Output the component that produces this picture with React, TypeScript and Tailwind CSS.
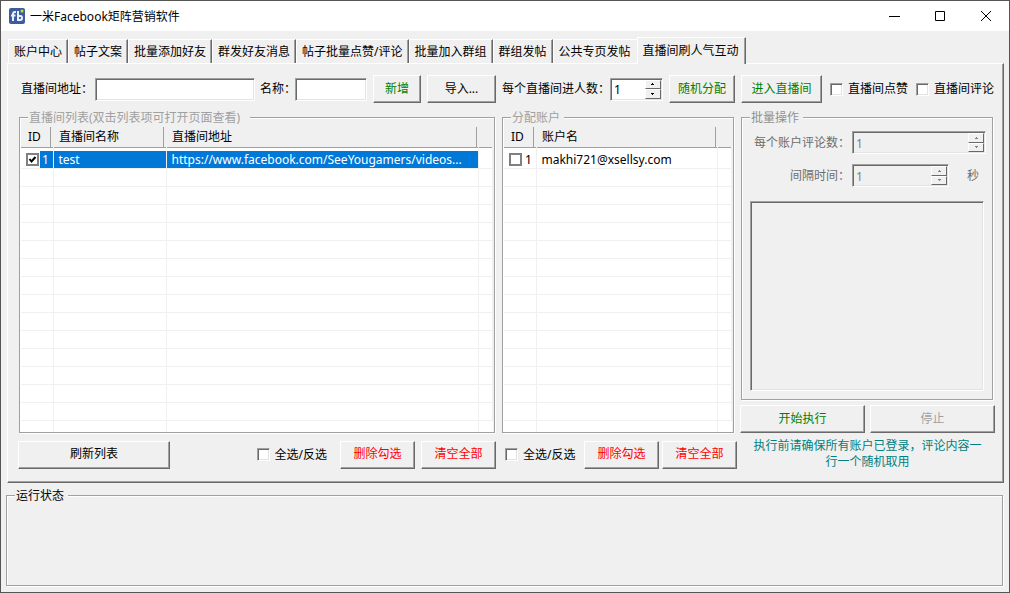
import React, { useState } from "react";

const tabs = [
  "账户中心",
  "帖子文案",
  "批量添加好友",
  "群发好友消息",
  "帖子批量点赞/评论",
  "批量加入群组",
  "群组发帖",
  "公共专页发帖",
  "直播间刷人气互动",
];

const blankRows = Array.from({ length: 14 }, (_, i) => i);

const sunken =
  "border border-t-[#a0a0a0] border-l-[#a0a0a0] border-r-white border-b-white shadow-[inset_1px_1px_0_#696969,inset_-1px_-1px_0_#e3e3e3]";
const cell = "h-[18px] border-r border-b border-[#f0f0f0] p-0";
const lastCell = "border-r border-[#f0f0f0] p-0";

type ButtonProps = {
  children: React.ReactNode;
  className?: string;
  disabled?: boolean;
};

const PushButton = ({ children, className = "", disabled }: ButtonProps) => (
  <button
    type="button"
    disabled={disabled}
    className={`h-7 shrink-0 border border-t-white border-l-white border-r-[#696969] border-b-[#696969] bg-[#f0f0f0] pb-px shadow-[inset_-1px_-1px_0_#a0a0a0] ${className}`}
  >
    {children}
  </button>
);

type SpinnerProps = { id: string; className: string; disabled?: boolean };

const Spinner = ({ id, className, disabled = false }: SpinnerProps) => {
  const [value, setValue] = useState("1");
  const step = (n: number) => setValue(String(Number(value) + n));
  const arrow =
    "flex flex-1 items-center justify-center border border-t-white border-l-white border-r-[#696969] border-b-[#696969] bg-[#f0f0f0]";

  return (
    <div
      className={`flex h-[23px] p-px ${sunken} ${disabled ? "bg-[#f0f0f0] text-[#808080]" : "bg-white"} ${className}`}
    >
      <input
        id={id}
        value={value}
        disabled={disabled}
        onChange={(e) => setValue(e.target.value)}
        className="min-w-0 flex-1 bg-transparent pt-0.5 pl-0.5 outline-none"
      />
      <div className="flex w-4 flex-col">
        <button type="button" aria-label="+" disabled={disabled} onClick={() => step(1)} className={arrow}>
          <svg width="3" height="2" viewBox="0 0 3 2" shapeRendering="crispEdges" fill="currentColor">
            <path d="M1 0h1v1h1v1H0V1h1z" />
          </svg>
        </button>
        <button type="button" aria-label="-" disabled={disabled} onClick={() => step(-1)} className={arrow}>
          <svg width="3" height="2" viewBox="0 0 3 2" shapeRendering="crispEdges" fill="currentColor">
            <path d="M0 0h3v1H2v1H1V1H0z" />
          </svg>
        </button>
      </div>
    </div>
  );
};

const CheckOption = ({ label }: { label: string }) => (
  <label className="flex shrink-0 items-center gap-[5px]">
    <input type="checkbox" className={`size-[13px] appearance-none bg-white checked:bg-[#0078d7] ${sunken}`} />
    {label}
  </label>
);

const RowCheck = ({ label, checked = false }: { label: string; checked?: boolean }) => {
  const [on, setOn] = useState(checked);
  return (
    <span className="relative mr-px ml-[5px] block size-[13px] text-black">
      <input
        type="checkbox"
        aria-label={label}
        checked={on}
        onChange={() => setOn(!on)}
        className="block size-[13px] appearance-none border-2 border-[#808080] bg-white"
      />
      {on && (
        <svg className="pointer-events-none absolute inset-0" width="13" height="13" viewBox="0 0 13 13" fill="none">
          <path d="M3.5 6l2 2.5L9.5 4" stroke="#000" strokeWidth="2" />
        </svg>
      )}
    </span>
  );
};

const HeadCell = ({ children, className = "pl-1.5" }: { children: React.ReactNode; className?: string }) => (
  <th className="p-0 pt-0.5 text-left font-normal">
    <div className={`mr-0.5 h-5 border-r border-[#a0a0a0] leading-5 ${className}`}>{children}</div>
  </th>
);

type GroupProps = {
  title: string;
  className?: string;
  legendClass?: string;
  children?: React.ReactNode;
};

const Group = ({ title, className = "", legendClass = "ml-2 pr-1", children }: GroupProps) => (
  <fieldset
    className={`min-w-0 border border-[#a0a0a0] shadow-[1px_1px_0_#fff,inset_1px_1px_0_#fff] ${className}`}
  >
    <legend className={`h-4 bg-[#f0f0f0] pl-px leading-[17px] ${legendClass}`}>{title}</legend>
    {children}
  </fieldset>
);

const RoomTable = () => (
  <table className="ml-px w-[calc(100%-2px)] table-fixed border-collapse bg-white">
    <colgroup>
      <col className="w-8" />
      <col className="w-[113px]" />
      <col />
      <col className="w-3.5" />
    </colgroup>
    <thead>
      <tr className="h-[22px] border-b border-[#a0a0a0] bg-[#f0f0f0]">
        <HeadCell className="pl-[7px]">ID</HeadCell>
        <HeadCell>直播间名称</HeadCell>
        <HeadCell>直播间地址</HeadCell>
        <th className="p-0" />
      </tr>
    </thead>
    <tbody>
      <tr className="h-[21px] text-white">
        <td className={cell}>
          <div className="mt-[3px] flex h-[17px] items-center">
            <RowCheck label="test" checked />
            <span className="h-[17px] flex-1 bg-[#0078d7] pl-0.5 leading-[17px]">1</span>
          </div>
        </td>
        <td className={cell}>
          <div className="mt-[3px] h-[17px] bg-[#0078d7] pl-[5px] leading-[17px]">test</div>
        </td>
        <td className={cell}>
          <div className="mt-[3px] h-[17px] truncate bg-[#0078d7] pl-[5px] leading-[17px]">
            https://www.facebook.com/SeeYougamers/videos...
          </div>
        </td>
        <td className={cell} />
      </tr>
      {blankRows.map((i) => (
        <tr key={i}>
          <td className={cell} />
          <td className={cell} />
          <td className={cell} />
          <td className={cell} />
        </tr>
      ))}
      <tr className="h-[11px]">
        <td className={lastCell} />
        <td className={lastCell} />
        <td className={lastCell} />
        <td />
      </tr>
    </tbody>
  </table>
);

const AccountTable = () => (
  <table className="ml-px w-[calc(100%-2px)] table-fixed border-collapse bg-white">
    <colgroup>
      <col className="w-8" />
      <col />
      <col className="w-3.5" />
    </colgroup>
    <thead>
      <tr className="h-[22px] border-b border-[#a0a0a0] bg-[#f0f0f0]">
        <HeadCell className="pl-[7px]">ID</HeadCell>
        <HeadCell>账户名</HeadCell>
        <th className="p-0" />
      </tr>
    </thead>
    <tbody>
      <tr className="h-[21px]">
        <td className={cell}>
          <div className="mt-[3px] flex h-[17px] items-center">
            <RowCheck label="makhi721@xsellsy.com" />
            <span className="flex-1 pl-0.5 leading-[17px]">1</span>
          </div>
        </td>
        <td className={cell}>
          <div className="mt-[3px] h-[17px] truncate pl-[5px] leading-[17px]">makhi721@xsellsy.com</div>
        </td>
        <td className={cell} />
      </tr>
      {blankRows.map((i) => (
        <tr key={i}>
          <td className={cell} />
          <td className={cell} />
          <td className={cell} />
        </tr>
      ))}
      <tr className="h-[11px]">
        <td className={lastCell} />
        <td className={lastCell} />
        <td />
      </tr>
    </tbody>
  </table>
);

const TitleBar = () => (
  <header className="flex h-[30px] items-center bg-white pl-2">
    <svg width="16" height="16" viewBox="0 0 16 16">
      <rect width="16" height="16" rx="2" fill="#3f5c9a" />
      <path d="M7 4H6Q4 4 4 6V13M2 7.500H6.500" fill="none" stroke="#e8eefb" strokeWidth="2" />
      <path d="M9 3v10M9 8h2.500Q13 8 13 10t-1.500 2H9" fill="none" stroke="#e8eefb" strokeWidth="2" />
      <circle cx="13" cy="3" r="1.500" fill="#c6d93a" />
    </svg>
    <h1 className="ml-[5px] flex-1 pt-px text-xs">一米Facebook矩阵营销软件</h1>
    <button type="button" aria-label="最小化" className="flex h-full w-[46px] items-center justify-center">
      <svg width="11" height="11" viewBox="0 0 11 11" stroke="#000" fill="none">
        <path d="M0 5.500h11" />
      </svg>
    </button>
    <button type="button" aria-label="最大化" className="flex h-full w-[46px] items-center justify-center">
      <svg width="10" height="10" viewBox="0 0 10 10" stroke="#000" fill="none">
        <path d="M.5.500h9v9h-9z" />
      </svg>
    </button>
    <button type="button" aria-label="关闭" className="flex h-full w-[46px] items-center justify-center">
      <svg width="10" height="10" viewBox="0 0 10 10" stroke="#000" fill="none">
        <path d="M0 0l10 10M10 0L0 10" />
      </svg>
    </button>
  </header>
);

const Toolbar = () => (
  <div className="flex h-7 items-center pr-[9px] pl-[13px]">
    <label htmlFor="room-url" className="w-[74px] shrink-0">直播间地址：</label>
    <input id="room-url" className={`h-[23px] min-w-0 flex-1 bg-white px-1 outline-none ${sunken}`} />
    <label htmlFor="room-name" className="ml-[5px] w-[35px] shrink-0 whitespace-nowrap">名称：</label>
    <input id="room-name" className={`h-[23px] w-[72px] bg-white px-1 outline-none ${sunken}`} />
    <PushButton className="ml-1.5 w-12 text-[#008000]">新增</PushButton>
    <PushButton className="ml-1.5 w-[69px]">导入...</PushButton>
    <label htmlFor="per-room" className="ml-1.5 w-[108px] shrink-0">每个直播间进人数：</label>
    <Spinner id="per-room" className="w-[53px]" />
    <PushButton className="ml-1.5 w-[66px] text-[#008000]">随机分配</PushButton>
    <PushButton className="mr-2 ml-1.5 w-[81px] text-[#008000]">进入直播间</PushButton>
    <CheckOption label="直播间点赞" />
    <div className="ml-2">
      <CheckOption label="直播间评论" />
    </div>
  </div>
);

const BatchPanel = () => (
  <div className="ml-[3px] flex w-[255px] shrink-0 flex-col">
    <Group title="批量操作" legendClass="pr-1 text-[#909090]" className="mr-0.5 ml-px pr-1.5 pb-2 pl-2">
      <div className="mt-1.5 flex h-[23px] items-center text-[#6d6d6d]">
        <label htmlFor="comment-count" className="w-[102px] shrink-0 pl-1">每个账户评论数：</label>
        <Spinner id="comment-count" disabled className="min-w-0 flex-1" />
      </div>
      <div className="mt-2.5 flex h-[23px] items-center text-[#6d6d6d]">
        <label htmlFor="interval" className="w-[102px] shrink-0 pl-10">间隔时间：</label>
        <Spinner id="interval" disabled className="w-[97px]" />
        <span className="ml-[18px]">秒</span>
      </div>
      <div className="mt-3.5 flex pr-0.5">
        <textarea
          aria-label="评论内容"
          disabled
          className={`h-[190px] min-w-0 flex-1 resize-none bg-[#f0f0f0] ${sunken}`}
        />
      </div>
    </Group>
    <div className="mt-[5px] flex gap-[5px]">
      <PushButton className="flex-1 text-[#008000]">开始执行</PushButton>
      <PushButton disabled className="flex-1 text-[#a0a0a0]">停止</PushButton>
    </div>
    <p className="mt-[5px] px-2.5 text-center leading-4 text-[#008080]">
      执行前请确保所有账户已登录，评论内容一行一个随机取用
    </p>
  </div>
);

const App: React.FC = () => {
  const [active, setActive] = useState(8);

  return (
    <div className="flex min-h-screen flex-col border border-[#555] bg-[#f0f0f0] font-['Noto_Sans','Noto_Sans_CJK_SC',sans-serif] text-xs leading-4 text-black">
      <TitleBar />
      <nav className="mt-1.5 ml-[7px] flex items-end">
        {tabs.map((tab, i) => (
          <button
            key={tab}
            type="button"
            onClick={() => setActive(i)}
            className={`shrink-0 border-t border-r border-l border-t-white border-l-white border-r-[#696969] whitespace-nowrap ${
              i === active
                ? "relative -mb-px h-[27px] bg-[#f0f0f0] pr-1.5 pl-[5px] shadow-[inset_-1px_0_0_#a0a0a0]"
                : i === active - 1
                  ? "h-6 border-r-transparent px-[5px]"
                  : "h-6 px-[5px] shadow-[inset_-1px_0_0_#a0a0a0]"
            }`}
          >
            {tab}
          </button>
        ))}
      </nav>
      <main className="mr-[5px] ml-1.5 border border-t-white border-l-white border-r-[#696969] border-b-[#696969] pt-[11px] pb-3 shadow-[inset_-1px_-1px_0_#a0a0a0]">
        <Toolbar />
        <div className="mt-1.5 mr-2 ml-2.5 flex">
          <div className="flex min-w-0 flex-1 flex-col">
            <Group
              title="直播间列表(双击列表项可打开页面查看)"
              legendClass="ml-2 pr-2.5 text-[#a0a0a0]"
              className="mx-px"
            >
              <RoomTable />
            </Group>
            <div className="mt-2 flex items-center">
              <PushButton className="w-[152px]">刷新列表</PushButton>
              <div className="mr-[13px] ml-auto">
                <CheckOption label="全选/反选" />
              </div>
              <PushButton className="w-[75px] text-[#ff0000]">删除勾选</PushButton>
              <PushButton className="ml-1.5 w-[75px] text-[#ff0000]">清空全部</PushButton>
            </div>
          </div>
          <div className="ml-1.5 flex w-[235px] shrink-0 flex-col">
            <Group title="分配账户" legendClass="ml-2 pr-1 text-[#a0a0a0]" className="mr-[3px]">
              <AccountTable />
            </Group>
            <div className="mt-2 flex items-center pl-[3px]">
              <CheckOption label="全选/反选" />
              <PushButton className="ml-auto w-[75px] text-[#ff0000]">删除勾选</PushButton>
              <PushButton className="ml-[3px] w-[75px] text-[#ff0000]">清空全部</PushButton>
            </div>
          </div>
          <BatchPanel />
        </div>
      </main>
      <Group title="运行状态" className="mt-1 mr-1.5 mb-1.5 ml-[5px] flex-1" />
    </div>
  );
};

export default App;
